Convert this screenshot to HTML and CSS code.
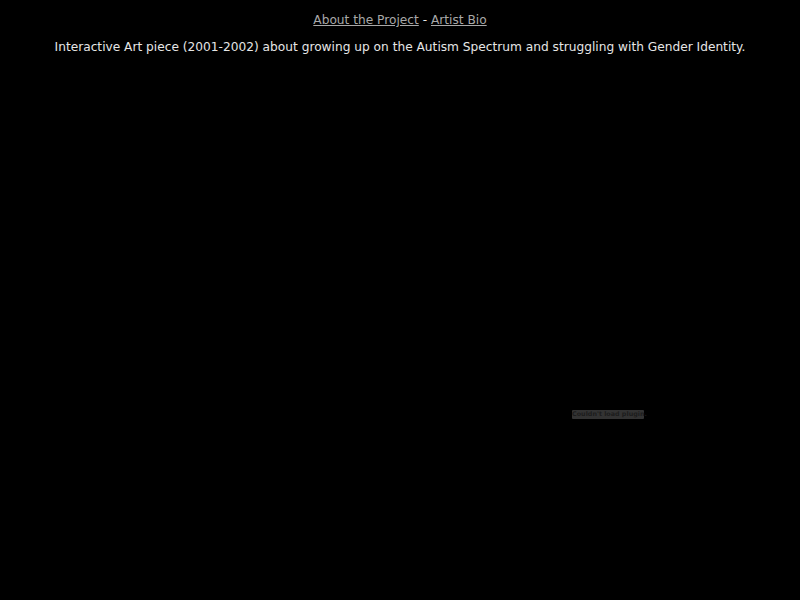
FILE: index.html
```html
<!DOCTYPE html>
<html>
<head>
<meta charset="utf-8">
<link rel="stylesheet" href="styles.css">
</head>
<body>
<div class="nav"><a href="#">About the Project</a> - <a href="#">Artist Bio</a></div>
<p class="desc">Interactive Art piece (2001-2002) about growing up on the Autism Spectrum and struggling with Gender Identity.</p>
<div class="stage">
  <div class="plugin">Couldn't load plugin.</div>
</div>
</body>
</html>
```
FILE: styles.css
```css
html, body {
  margin: 0;
  background: #000;
}
body {
  font-family: "DejaVu Sans", Verdana, sans-serif;
  font-size: 12.2px;
  color: #e6e6e6;
  text-align: center;
}
.nav {
  padding-top: 12px;
  line-height: 16px;
}
.nav a {
  color: #a8a8a8;
}
.desc {
  margin: 11px 0 0;
  line-height: 16px;
}
.stage {
  position: relative;
  height: 540px;
}
.plugin {
  position: absolute;
  left: 572px;
  top: 355px;
  width: 72px;
  height: 9px;
  background: #333;
  color: #1c1c1c;
  font-size: 6.4px;
  line-height: 9px;
  font-weight: bold;
  border-radius: 1px;
  white-space: nowrap;
}
```
